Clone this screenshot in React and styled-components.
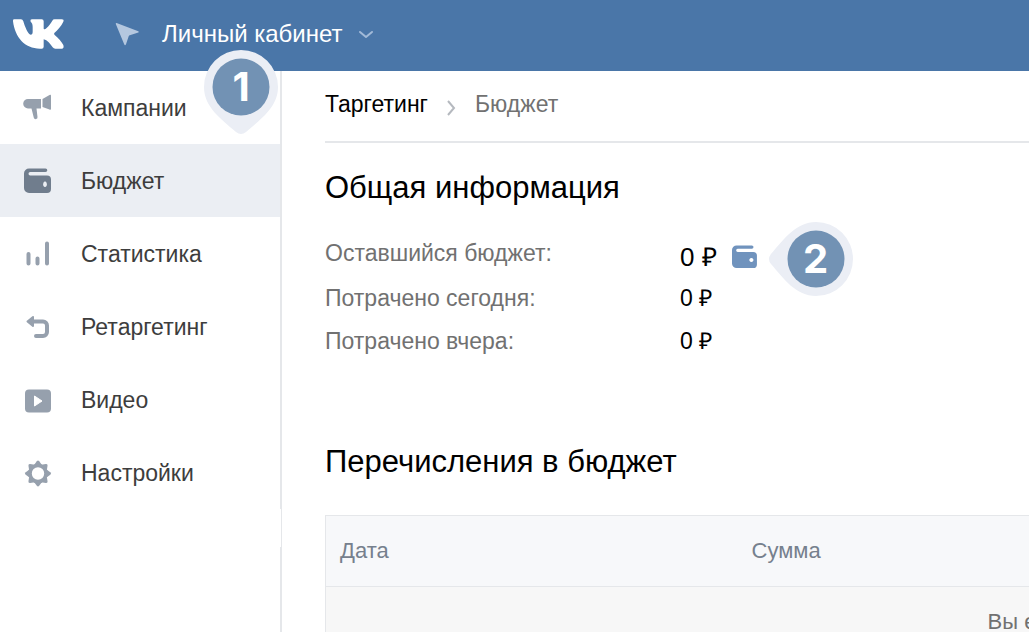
import React from 'react';
import styled, { createGlobalStyle } from 'styled-components';

const color = {
  header: '#4a76a8',
  active: '#ebeef3',
  line: '#e5e7ea',
  icon: '#96a0ad',
  iconActive: '#707d8d',
  blue: '#7093bd',
  pin: '#ebeef5',
  pinInner: '#7292b4',
  label: '#717171',
};

const GlobalStyle = createGlobalStyle`
  * {
    box-sizing: border-box;
  }
  body {
    margin: 0;
    overflow: hidden;
    background: #fff;
    color: #000;
    font-family: 'Liberation Sans', Arial, sans-serif;
    font-size: 23px;
    line-height: 26px;
  }
`;

const Page = styled.div`
  display: flex;
  flex-direction: column;
  min-height: 100vh;
`;

const Header = styled.header`
  display: flex;
  align-items: center;
  height: 71px;
  padding: 0 12px 4px;
  background: ${color.header};
`;

const Logo = styled.a`
  display: flex;
  margin-right: 50px;
`;

const CabinetButton = styled.button`
  display: flex;
  align-items: center;
  padding: 0;
  border: none;
  background: none;
  color: #fff;
  font: inherit;
  font-size: 24px;
  cursor: pointer;
`;

const CabinetName = styled.span`
  margin: 0 15px 0 22px;
`;

const Body = styled.div`
  display: flex;
  flex: 1;
`;

const Sidebar = styled.aside`
  display: flex;
  flex: none;
  flex-direction: column;
  width: 282px;
`;

const Nav = styled.nav`
  position: relative;
  border-right: 2px solid ${color.line};
`;

const NavBreak = styled.div`
  height: 38px;
  border-right: 1px solid ${color.line};
`;

const NavRest = styled.div`
  flex: 1;
  border-right: 2px solid ${color.line};
`;

const NavItem = styled.a`
  display: flex;
  align-items: center;
  height: 73px;
  padding-left: 22px;
  background: ${(p) => (p.$active ? color.active : 'transparent')};
  color: #3d3d3d;
  text-decoration: none;
  svg {
    margin-right: 29px;
    color: ${(p) => (p.$active ? color.iconActive : color.icon)};
  }
`;

const Pin = styled.div`
  position: absolute;
  width: 76px;
  height: 86px;
  svg {
    position: absolute;
  }
`;

const NavPin = styled(Pin)`
  top: -22px;
  right: 1px;
`;

const BudgetPin = styled(Pin)`
  top: -11px;
  left: 100%;
  margin-left: 11px;
`;

const PinNumber = styled.span`
  position: absolute;
  top: 8px;
  left: ${(p) => p.$left}px;
  width: 60px;
  color: #fff;
  font: bold 40px/60px Inter, sans-serif;
  text-align: center;
`;

const Main = styled.main`
  flex: 1;
  min-width: 0;
  padding-left: 43px;
  overflow: hidden;
`;

const Crumbs = styled.nav`
  display: flex;
  align-items: center;
  height: 72px;
  padding-bottom: 4px;
  border-bottom: 2px solid ${color.line};
  color: ${color.label};
  a {
    color: #000;
    text-decoration: none;
  }
  svg {
    margin: 8px 18px 0 17px;
    color: #b5b9bf;
  }
`;

const Title = styled.h2`
  margin: 0;
  padding-top: ${(p) => p.$top}px;
  font-size: 31px;
  font-weight: normal;
  line-height: 36px;
`;

const Stats = styled.dl`
  display: grid;
  grid-template-columns: 355px max-content;
  grid-template-rows: 45px 43px 43px;
  margin: 26px 0 0;
`;

const StatName = styled.dt`
  padding-top: 8px;
  color: ${color.label};
`;

const StatValue = styled.dd`
  position: relative;
  display: flex;
  align-items: center;
  gap: 14px;
  height: ${(p) => (p.$large ? 50 : 42)}px;
  margin: 0;
  font-size: ${(p) => (p.$large ? 26 : 23)}px;
`;

const WalletButton = styled.button`
  display: flex;
  padding: 0;
  border: none;
  background: none;
  color: ${color.blue};
  cursor: pointer;
`;

const Table = styled.table`
  min-width: 1374px;
  margin-top: 35px;
  border: 1px solid ${color.line};
  border-spacing: 0;
  background: #f7f7f7;
  color: ${color.label};
  font-size: 22px;
  table-layout: fixed;
`;

const HeadCell = styled.th`
  width: ${(p) => p.$width};
  height: 71px;
  padding: 0 14px;
  border-bottom: 1px solid ${color.line};
  background: #f7f8fa;
  color: #76808d;
  font-weight: normal;
  text-align: left;
`;

const EmptyCell = styled.td`
  height: 70px;
  padding: 0;
  text-align: center;
`;

const WalletIcon = ({ width = 28, height = 26, round }) => (
  <svg width={width} height={height} viewBox="0 0 28 26" fill="currentColor" aria-hidden="true">
    <path
      fillRule="evenodd"
      d={`M6 .5H22.500a1.800 1.800 0 0 1 0 3.600H7.200a1.400 1.400 0 0 0 0 3.400H24a4 4 0 0 1 4 4V21a4 4 0 0 1-4 4H6a5 5 0 0 1-5-5V5.500a5 5 0 0 1 5-5Z${
        round ? 'M22 14a2.200 2.200 0 1 0 .01 0Z' : 'M22 13.500a1.900 2.800 0 1 0 .01 0Z'
      }`}
    />
  </svg>
);

const MegaphoneIcon = () => (
  <svg width="30" height="28" viewBox="0 0 30 28" fill="currentColor" aria-hidden="true">
    <path d="M6 5H19V14.500H14.500l1 8.500a1.900 1.900 0 0 1-3.700.8L9.500 14.500H6a4.800 4.800 0 0 1-4.800-4.800A4.800 4.800 0 0 1 6 5Z" />
    <path d="M20.500 5 27.500 1a.9.900 0 0 1 1.500.8V14.800a.9.900 0 0 1-1.500.8L20.500 13Z" />
  </svg>
);

const StatsIcon = () => (
  <svg width="30" height="28" viewBox="0 0 30 28" stroke="currentColor" strokeWidth="4" strokeLinecap="round" aria-hidden="true">
    <path d="M6.500 14v9.500M15.500 18.500v5M25 3.500v20" />
  </svg>
);

const ReturnIcon = () => (
  <svg width="30" height="28" viewBox="0 0 30 28" fill="none" aria-hidden="true">
    <path d="M10 8.500H21a4 4 0 0 1 4 4V19a4 4 0 0 1-4 4H14" stroke="currentColor" strokeWidth="4" strokeLinecap="round" />
    <path d="M5.500 8.500 11 4V13Z" fill="currentColor" stroke="currentColor" strokeWidth="2" strokeLinejoin="round" />
  </svg>
);

const VideoIcon = () => (
  <svg width="30" height="28" viewBox="0 0 30 28" aria-hidden="true">
    <rect x="3" y="3.500" width="26" height="23" rx="4" fill="currentColor" />
    <path d="M12.500 10 20 15 12.500 20Z" fill="#fff" stroke="#fff" strokeLinejoin="round" />
  </svg>
);

const GearIcon = () => (
  <svg width="30" height="28" viewBox="0 0 30 28" stroke="currentColor" fill="none" aria-hidden="true">
    <circle cx="16" cy="14.500" r="8" strokeWidth="3.600" />
    <g fill="currentColor" stroke="none">
      {[0, 45, 90, 135, 180, 225, 270, 315].map((angle) => (
        <path key={angle} d="M12 6 14.800 2.200a1.500 1.500 0 0 1 2.400 0L20 6Z" transform={`rotate(${angle} 16 14.500)`} />
      ))}
    </g>
  </svg>
);

const items = [
  { name: 'Кампании', Icon: MegaphoneIcon },
  { name: 'Бюджет', Icon: () => <WalletIcon width={30} />, active: true },
  { name: 'Статистика', Icon: StatsIcon },
  { name: 'Ретаргетинг', Icon: ReturnIcon },
  { name: 'Видео', Icon: VideoIcon },
  { name: 'Настройки', Icon: GearIcon },
];

const App = () => (
  <Page>
    <GlobalStyle />
    <Header>
      <Logo href="#" aria-label="VK">
        <svg width="53" height="32" viewBox="0 0 159 96" fill="#fff" aria-hidden="true">
          <path d="M6 4H27Q32 4 34 10C39 27 48 49 56 50Q62 50 62 41V27C62 18 60 15 56 11Q54 4 60 4H89Q95 4 95 10V32Q98 36 103 31C111 23 117 15 121 8Q123 4 128 4H149Q157 4 154 11C148 24 136 36 127 45Q125 48 128 51C138 60 149 71 154 81Q157 92 149 92H130Q125 92 122 88C115 78 106 66 95 64V86Q95 92 89 92H84C38 92 9 58 3 10Q2 4 6 4Z" />
        </svg>
      </Logo>
      <CabinetButton>
        <svg width="25" height="24" viewBox="0 0 25 24" fill="#b4c7df" aria-hidden="true">
          <path d="M1.600 1 23.300 9.300Q24.500 10 23.300 10.600L14.800 13.300Q14 13.500 13.700 14.300L11 22.300Q10 24 9.200 22.300L.8 2Q.6.800 1.600 1Z" />
        </svg>
        <CabinetName>Личный кабинет</CabinetName>
        <svg width="16" height="10" viewBox="0 0 16 10" fill="none" stroke="#a2bad8" strokeWidth="2" strokeLinecap="round" strokeLinejoin="round" aria-hidden="true">
          <path d="M2 3 8 8 14 3" />
        </svg>
      </CabinetButton>
    </Header>
    <Body>
      <Sidebar>
        <Nav>
          {items.map(({ name, Icon, active }) => (
            <NavItem key={name} href="#" $active={active}>
              <Icon />
              {name}
            </NavItem>
          ))}
          <NavPin>
            <svg width="76" height="86" viewBox="0 0 76 86" aria-hidden="true">
              <path d="M38 1A37 37 0 0 0 1 38C1 58 18 70 33 83Q38 87 43 83C58 70 75 58 75 38A37 37 0 0 0 38 1Z" fill={color.pin} />
              <circle cx="38" cy="38" r="28.500" fill={color.pinInner} />
            </svg>
            <PinNumber $left={8}>1</PinNumber>
          </NavPin>
        </Nav>
        <NavBreak />
        <NavRest />
      </Sidebar>
      <Main>
        <Crumbs>
          <a href="#">Таргетинг</a>
          <svg width="12" height="18" viewBox="0 0 12 18" fill="none" stroke="currentColor" strokeWidth="2" aria-hidden="true">
            <path d="M3 2 9 9 3 16" />
          </svg>
          <span>Бюджет</span>
        </Crumbs>
        <Title $top={27}>Общая информация</Title>
        <Stats>
          <StatName>Оставшийся бюджет:</StatName>
          <StatValue $large>
            <span>0 ₽</span>
            <WalletButton aria-label="Пополнить бюджет">
              <WalletIcon width={26} height={24} round />
            </WalletButton>
            <BudgetPin>
              <svg width="86" height="76" viewBox="0 0 86 76" aria-hidden="true">
                <path d="M48 1A37 37 0 0 1 48 75C28 75 16 58 3 43Q-1 38 3 33C16 18 28 1 48 1Z" fill={color.pin} />
                <circle cx="48" cy="38" r="28.500" fill={color.pinInner} />
              </svg>
              <PinNumber $left={18}>2</PinNumber>
            </BudgetPin>
          </StatValue>
          <StatName>Потрачено сегодня:</StatName>
          <StatValue>0 ₽</StatValue>
          <StatName>Потрачено вчера:</StatName>
          <StatValue>0 ₽</StatValue>
        </Stats>
        <Title $top={81}>Перечисления в бюджет</Title>
        <Table>
          <thead>
            <tr>
              <HeadCell $width="30%">Дата</HeadCell>
              <HeadCell>Сумма</HeadCell>
            </tr>
          </thead>
          <tbody>
            <tr>
              <EmptyCell colSpan={2}>Вы е</EmptyCell>
            </tr>
          </tbody>
        </Table>
      </Main>
    </Body>
  </Page>
);

export default App;
